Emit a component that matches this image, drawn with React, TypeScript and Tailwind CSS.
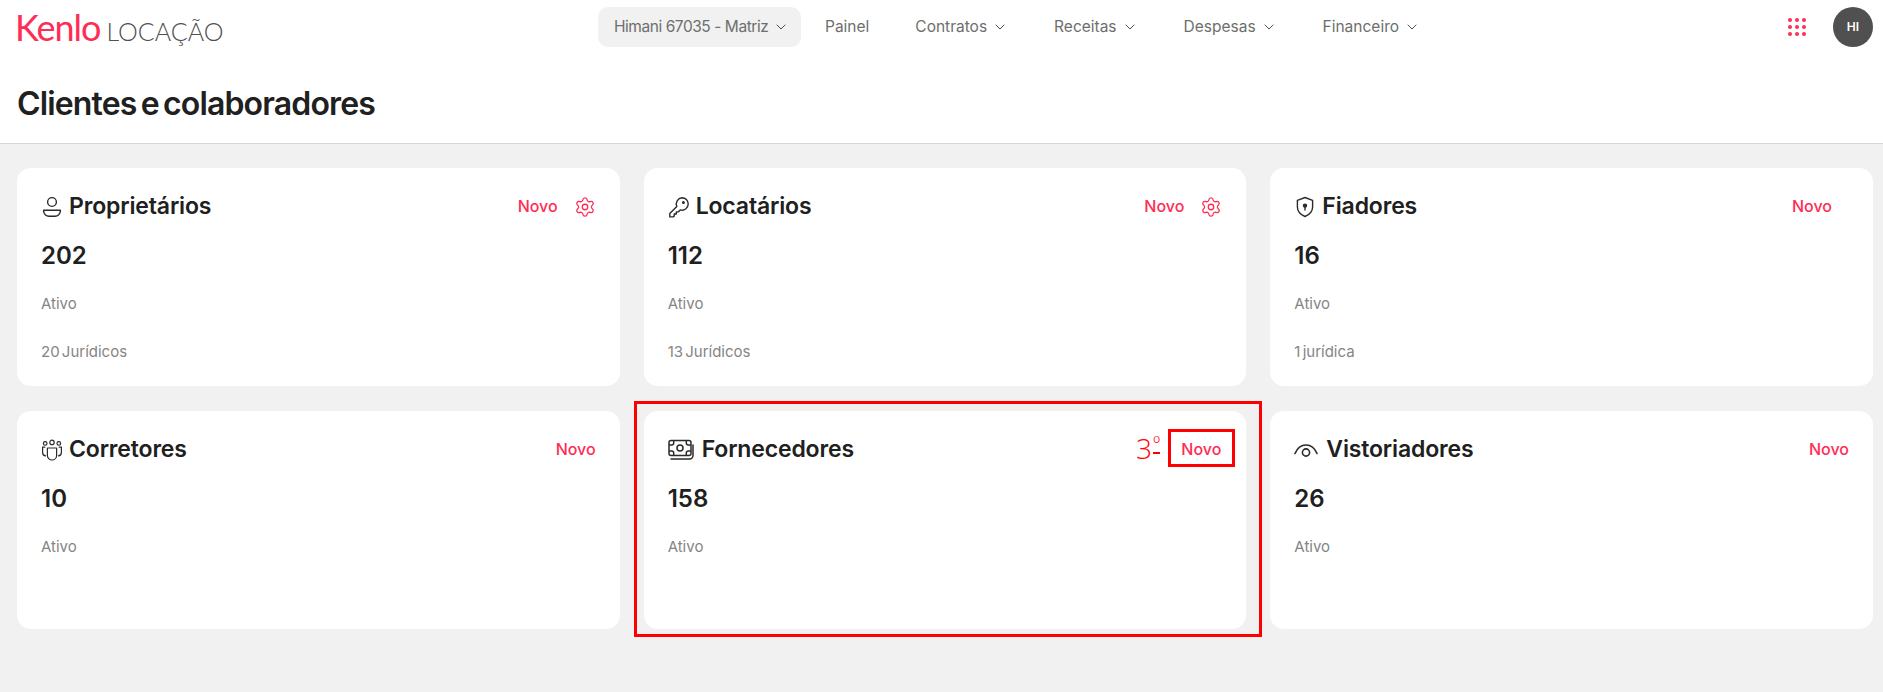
import { ChevronDown, Settings } from 'lucide-react'
import type { ReactNode } from 'react'

const iconProps = { fill: 'none', stroke: '#2b2b2b', strokeWidth: 1.4, strokeLinecap: 'round' as const, strokeLinejoin: 'round' as const }

function PersonIcon() {
  return (
    <svg width="20" height="22" viewBox="0 0 20 22" {...iconProps}>
      <circle cx="10" cy="6" r="4.4" />
      <path d="M1.6 14.2h16.8v.8a5.4 5.4 0 0 1-5.4 5.2H7a5.4 5.4 0 0 1-5.4-5.2z" />
    </svg>
  )
}

function KeyIcon() {
  return (
    <svg width="22" height="22" viewBox="0 0 22 22" {...iconProps}>
      <path d="M14 1.8a6.2 6.2 0 0 1 6.2 6.2 6.2 6.2 0 0 1-8 5.9l-1.9 2h-2v2.1H6.2v2.1l-1 .8H1.8v-3.3l7-7.1A6.2 6.2 0 0 1 14 1.8z" />
      <circle cx="15.4" cy="6.6" r="0.8" fill="#2b2b2b" />
    </svg>
  )
}

function ShieldIcon() {
  return (
    <svg width="20" height="22" viewBox="0 0 20 22" {...iconProps}>
      <path d="M10 1.5l7.6 2.8v6.6c0 4.4-3.2 7.6-7.6 9.6-4.4-2-7.6-5.2-7.6-9.6V4.3z" />
      <circle cx="10" cy="9.6" r="1.5" fill="#2b2b2b" />
      <path d="M10 10.5v3.6" />
    </svg>
  )
}

function TeamIcon() {
  return (
    <svg width="22" height="22" viewBox="0 0 22 22" {...iconProps} strokeWidth={1.2}>
      <circle cx="11" cy="3.4" r="2.2" />
      <circle cx="4.2" cy="4.4" r="1.8" />
      <circle cx="17.8" cy="4.4" r="1.8" />
      <path d="M6.4 9h9.2v7.4a4.6 4.6 0 0 1-9.2 0z" />
      <path d="M3.8 8.2H1.6v5.4a3.4 3.4 0 0 0 3 3.2" />
      <path d="M18.2 8.2h2.2v5.4a3.4 3.4 0 0 1-3 3.2" />
    </svg>
  )
}

function MoneyIcon() {
  return (
    <svg width="28" height="22" viewBox="0 0 28 22" {...iconProps} strokeWidth={1.5}>
      <rect x="1" y="1.5" width="22" height="15" rx="2" />
      <circle cx="12" cy="9" r="3" />
      <path d="M1.5 6h2.2a2 2 0 0 0 2-2V2M22.5 6h-2.2a2 2 0 0 1-2-2V2M1.5 12h2.2a2 2 0 0 1 2 2v2M22.5 12h-2.2a2 2 0 0 0-2 2v2" />
      <path d="M25 6v10.5a3.4 3.4 0 0 1-3.4 3.4H3" />
    </svg>
  )
}

function EyeIcon() {
  return (
    <svg width="26" height="16" viewBox="0 0 26 16" {...iconProps} strokeWidth={1.6}>
      <path d="M1 11.5C3.4 5.8 7.2 3 12 3s8.6 2.8 11 8.5" />
      <circle cx="12" cy="10.5" r="3.6" />
    </svg>
  )
}

function NavItem({ label, chevron = true, tight }: { label: string; chevron?: boolean; tight?: boolean }) {
  return (
    <div className="flex items-center gap-[5px] text-[15.5px] text-[#6e6e6e]">
      <span className={tight ? 'tracking-[-0.45px]' : ''}>{label}</span>
      {chevron && <ChevronDown size={16} strokeWidth={1.5} className="text-[#505050]" />}
    </div>
  )
}

function Card({ icon, title, count, juridicos, gear, novoClass = 'mr-0' }: {
  icon: ReactNode
  title: string
  count: number
  juridicos?: string
  gear?: boolean
  novoClass?: string
}) {
  return (
    <div className="h-[218px] rounded-[14px] bg-white px-6 pt-[22px]">
      <div className="flex h-[33px] items-center justify-between">
        <div className="flex items-center gap-[6px]">
          <span className="flex min-w-[22px] shrink-0 items-center justify-center">{icon}</span>
          <h2 className="text-[23px] font-semibold leading-none tracking-[-0.15px] text-[#202020]">{title}</h2>
        </div>
        <div className="flex items-center gap-[16px]">
          <span className={`mb-[2px] text-[16px] font-medium text-[#ff2d55] ${novoClass}`}>Novo</span>
          {gear && <Settings size={22} strokeWidth={1.4} className="text-[#ff2d55]" />}
        </div>
      </div>
      <p className="mt-[18px] text-[24px] font-semibold leading-[30px] text-[#202020]">{count}</p>
      <p className="mt-[21px] text-[15px] leading-[24px] text-[#858585]">Ativo</p>
      {juridicos && <p className="mt-[24px] text-[15px] leading-[24px] text-[#858585] [word-spacing:-2px]">{juridicos}</p>}
    </div>
  )
}

export default function App() {
  return (
    <div className="relative min-h-[692px] bg-[#f1f1f1] font-['Inter',sans-serif]">
      <div className="bg-white">
        <header className="flex h-[54px] items-start pl-[17px] pr-[10px] pt-[7px]">
          <div className="flex w-[581px] items-baseline pt-[2px]">
            <span className="-ml-[2px] font-['Lato',sans-serif] text-[36px] leading-[36px] tracking-[-1px] text-[#ff2d55]">Kenlo</span>
            <span className="ml-[6px] font-['Lato',sans-serif] text-[25px] font-light leading-[36px] text-[#505050]">LOCAÇÃO</span>
          </div>
          <nav className="flex items-center">
            <div className="flex h-10 w-[203px] items-center rounded-[10px] bg-[#f1f1f1] pl-4">
              <NavItem label="Himani 67035 - Matriz" tight />
            </div>
            <div className="ml-6 flex h-10 items-center gap-[46px]">
              <NavItem label="Painel" chevron={false} />
              <NavItem label="Contratos" />
              <NavItem label="Receitas" />
              <NavItem label="Despesas" />
              <NavItem label="Financeiro" />
            </div>
          </nav>
          <div className="ml-auto flex items-center gap-[27px]">
            <div className="grid grid-cols-3 gap-[3px]">
              {Array.from({ length: 9 }).map((_, i) => (
                <span key={i} className="h-1 w-1 rounded-full bg-[#ff2d55]" />
              ))}
            </div>
            <div className="flex h-10 w-10 items-center justify-center rounded-full bg-[#505050] text-[12px] font-semibold text-white">HI</div>
          </div>
        </header>
        <div className="flex h-[90px] items-center border-b border-[#d6d6d6] pl-[17px] pt-[10px]">
          <h1 className="text-[32px] font-semibold tracking-[-0.85px] text-[#202020] [word-spacing:-3px]">Clientes e colaboradores</h1>
        </div>
      </div>

      <main className="grid grid-cols-3 gap-x-6 gap-y-[25px] pl-[17px] pr-[10px] pt-6">
        <Card icon={<PersonIcon />} title="Proprietários" count={202} juridicos="20 Jurídicos" gear />
        <Card icon={<KeyIcon />} title="Locatários" count={112} juridicos="13 Jurídicos" gear />
        <Card icon={<ShieldIcon />} title="Fiadores" count={16} juridicos="1 jurídica" novoClass="mr-[17px]" />
        <Card icon={<TeamIcon />} title="Corretores" count={10} />
        <Card icon={<MoneyIcon />} title="Fornecedores" count={158} novoClass="mr-[1px]" />
        <Card icon={<EyeIcon />} title="Vistoriadores" count={26} />
      </main>

      {/* red annotation drawn over the screenshot */}
      <div className="pointer-events-none absolute left-[634px] top-[401px] h-[236px] w-[628px] border-[3px] border-[#ff0000]" />
      <div className="pointer-events-none absolute left-[1168px] top-[429px] h-[38px] w-[67px] border-[3px] border-[#ff0000]" />
      <span className="absolute left-[1136px] top-[429px] flex items-start font-['Open_Sans',sans-serif] text-[28px] font-light leading-[38px] text-[#ff0000]">
        3
        <span className="ml-[1px] mt-[7px] inline-block border-b-2 border-[#ff0000] text-[20px] leading-[16px]">º</span>
      </span>
    </div>
  )
}
